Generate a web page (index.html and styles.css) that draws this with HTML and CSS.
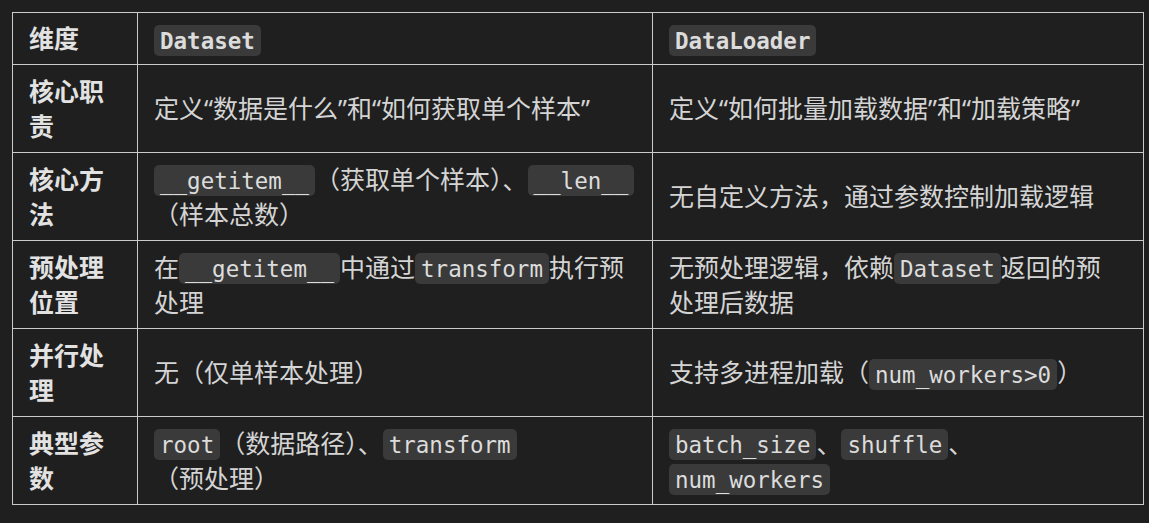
FILE: index.html
```html
<!DOCTYPE html>
<html lang="zh-CN">
<head>
<meta charset="utf-8">
<title>Dataset vs DataLoader</title>
<link rel="stylesheet" href="styles.css">
</head>
<body>
<div class="page">
  <table class="cmp">
    <colgroup>
      <col class="c1">
      <col class="c2">
      <col class="c3">
    </colgroup>
    <thead>
      <tr>
        <th>维度</th>
        <th><code>Dataset</code></th>
        <th><code>DataLoader</code></th>
      </tr>
    </thead>
    <tbody>
      <tr>
        <td class="dim">核心职责</td>
        <td>定义“数据是什么”和“如何获取单个样本”</td>
        <td>定义“如何批量加载数据”和“加载策略”</td>
      </tr>
      <tr>
        <td class="dim">核心方法</td>
        <td><code>__getitem__</code>（获取单个样本）、<code>__len__</code>（样本总数）</td>
        <td>无自定义方法，通过参数控制加载逻辑</td>
      </tr>
      <tr>
        <td class="dim">预处理位置</td>
        <td>在<code>__getitem__</code>中通过<code>transform</code>执行预处理</td>
        <td>无预处理逻辑，依赖<code>Dataset</code>返回的预<span class="nw">处理后数据</span></td>
      </tr>
      <tr>
        <td class="dim">并行处理</td>
        <td>无（仅单样本处理）</td>
        <td>支持多进程加载（<code>num_workers&gt;0</code>）</td>
      </tr>
      <tr>
        <td class="dim">典型参数</td>
        <td><code>root</code>（数据路径）、<code>transform</code><span class="nw">（预处理）</span></td>
        <td><code>batch_size</code>、<code>shuffle</code>、<code>num_workers</code></td>
      </tr>
    </tbody>
  </table>
</div>
</body>
</html>
```

FILE: styles.css
```css
html, body {
  margin: 0;
  padding: 0;
  background: #1f1f1f;
}

.page {
  padding: 12px 0 0 12px;
  font-family: "Noto Sans", "Noto Sans CJK SC", sans-serif;
  font-size: 25px;
  line-height: 35px;
  color: #d4d4d4;
}

.cmp {
  border-collapse: collapse;
  table-layout: fixed;
  width: 1131px;
}

.c1 { width: 125px; }
.c2 { width: 515px; }
.c3 { width: 491px; }

.cmp th,
.cmp td {
  border: 1px solid #cacaca;
  text-align: left;
  vertical-align: middle;
}

.cmp th {
  padding: 8px 16px;
  font-weight: 700;
  color: #e2e2e2;
}

.cmp td {
  padding: 8.5px 16px;
}

.cmp td.dim {
  font-weight: 700;
  color: #e2e2e2;
}

code {
  font-family: "DejaVu Sans Mono", monospace;
  font-size: 22.5px;
  line-height: 1;
  background: #3a3a3a;
  color: #dcdcdc;
  border-radius: 5px;
  padding: 2.5px 6px;
}

th code {
  font-weight: 700;
}

.nw {
  white-space: nowrap;
}
```
